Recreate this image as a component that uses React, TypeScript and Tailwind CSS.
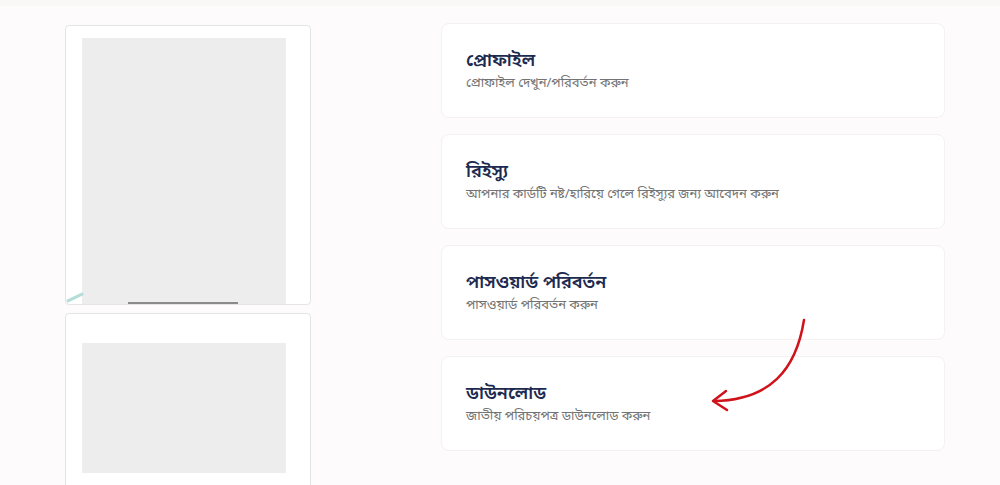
import React from "react";

const items = [
  { t: "প্রোফাইল", s: "প্রোফাইল দেখুন/পরিবর্তন করুন" },
  { t: "রিইস্যু", s: "আপনার কার্ডটি নষ্ট/হারিয়ে গেলে রিইস্যুর জন্য আবেদন করুন" },
  { t: "পাসওয়ার্ড পরিবর্তন", s: "পাসওয়ার্ড পরিবর্তন করুন" },
  { t: "ডাউনলোড", s: "জাতীয় পরিচয়পত্র ডাউনলোড করুন" },
];

export default function App() {
  return (
    <div
      className="relative w-[1000px] h-[485px] overflow-hidden bg-[#fdfbfb]"
      style={{ fontFamily: '"Noto Sans Bengali", "Noto Sans", "Liberation Sans", sans-serif' }}
    >
      <div className="h-[6px] bg-[#faf7f7]" />
      <div className="flex pl-[65px] pt-[17px] gap-[130px]">
        <div className="flex flex-col gap-[8px] w-[246px] mt-[2px]">
          <div className="relative h-[280px] bg-white border border-[#e4e4e4] rounded-[4px] pt-[12px] pl-[16px] overflow-hidden">
            <div className="w-[204px] h-[267px] bg-[#ededed]" />
            <div className="absolute left-[62px] bottom-[0px] w-[110px] h-[2px] bg-[#8a8a8a]" />
            <div className="absolute left-[0px] bottom-[5px] w-[18px] h-[3px] bg-[#b5dcd9] -rotate-[25deg]" />
          </div>
          <div className="relative h-[200px] bg-white border border-[#e4e4e4] rounded-[4px] pt-[29px] pl-[16px]">
            <div className="w-[204px] h-[130px] bg-[#ededed]" />
          </div>
        </div>
        <div className="flex flex-col gap-[16px] w-[504px]">
          {items.map((it) => (
            <div
              key={it.t}
              className="h-[95px] bg-white border border-[#f5f1f1] rounded-[8px] pl-[24px] flex flex-col justify-center"
            >
              <div className="text-[18px] leading-[26px] font-semibold text-[#1c2a4f]">{it.t}</div>
              <div className="text-[13px] leading-[20px] text-[#737373]">{it.s}</div>
            </div>
          ))}
        </div>
      </div>
      <svg className="absolute left-0 top-0" width="1000" height="485" viewBox="0 0 1000 485">
        <path d="M804 320 C 796 370, 770 400, 714 401" fill="none" stroke="#d0121b" strokeWidth="2.5" strokeLinecap="round" />
        <path d="M726 391 L 713 401 L 727 410" fill="none" stroke="#d0121b" strokeWidth="2.5" strokeLinecap="round" strokeLinejoin="round" />
      </svg>
    </div>
  );
}
